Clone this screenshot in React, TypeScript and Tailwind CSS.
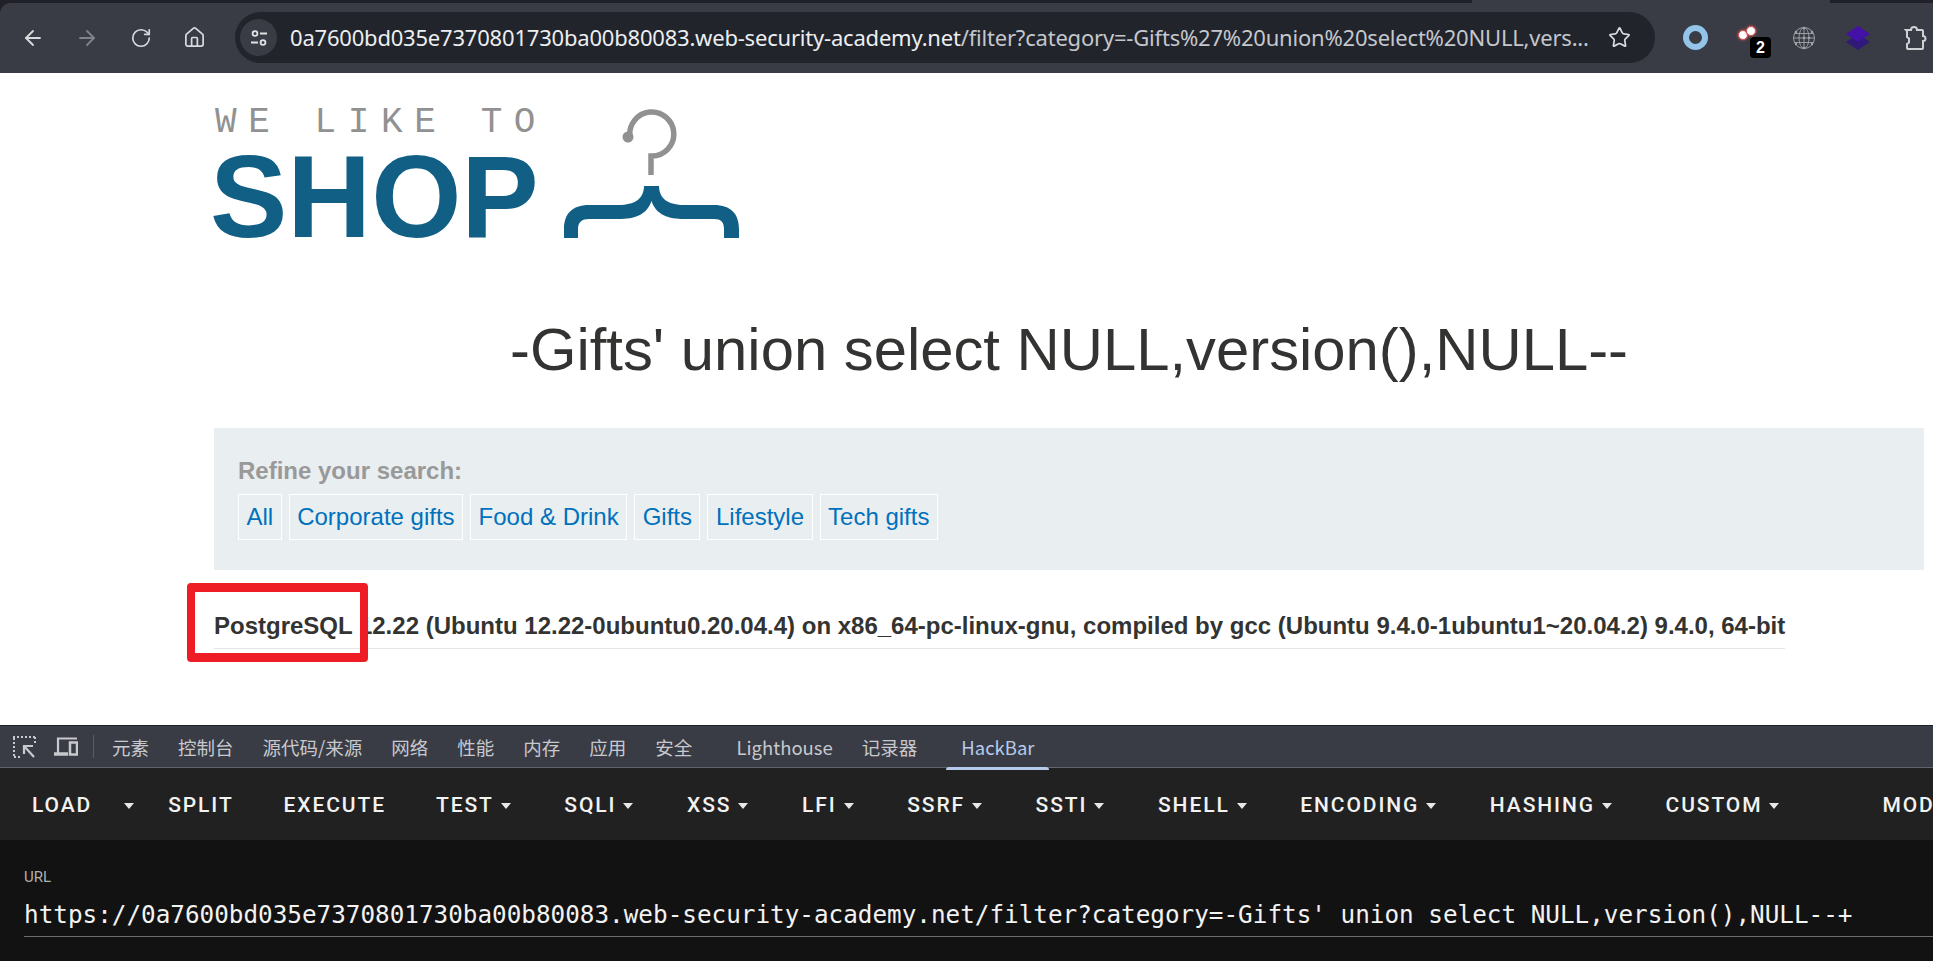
import { ArrowLeft, ArrowRight, RotateCw, Home, Star } from 'lucide-react'

const CATEGORIES = ['All', 'Corporate gifts', 'Food & Drink', 'Gifts', 'Lifestyle', 'Tech gifts']

const TABS = [
  { label: '元素', cls: '' },
  { label: '控制台', cls: '' },
  { label: '源代码/来源', cls: '' },
  { label: '网络', cls: '' },
  { label: '性能', cls: '' },
  { label: '内存', cls: '' },
  { label: '应用', cls: '' },
  { label: '安全', cls: '' },
  { label: 'Lighthouse', cls: 'ml-[15px]' },
  { label: '记录器', cls: '' },
]

const MENU = ['TEST', 'SQLI', 'XSS', 'LFI', 'SSRF', 'SSTI', 'SHELL', 'ENCODING', 'HASHING', 'CUSTOM']

function Caret() {
  return (
    <svg width="10" height="6" viewBox="0 0 10 6" className="shrink-0">
      <path d="M0 0h10L5 6z" fill="#e8e8e8" />
    </svg>
  )
}

function BrowserBar() {
  return (
    <div className="h-[73px] shrink-0 bg-[#1f2028]">
      <div className="h-[3px] flex">
        <div className="w-[1472px]" />
        <div className="w-[358px] bg-[#3a3c45]" />
      </div>
      <div className="h-[70px] rounded-tl-[10px] bg-[#3a3c45] flex items-center pl-[21px] pb-[1px]">
        <ArrowLeft size={24} strokeWidth={1.8} className="text-[#d8dadf]" />
        <ArrowRight size={24} strokeWidth={1.8} className="text-[#7f828a] ml-[30px]" />
        <RotateCw size={22} strokeWidth={1.8} className="text-[#d8dadf] ml-[31px]" />
        <Home size={23} strokeWidth={1.8} className="text-[#d8dadf] ml-[31px]" />
        <div className="ml-[29px] w-[1420px] h-[51px] rounded-full bg-[#22242c] flex items-center pl-[5px]">
          <div className="w-[37px] h-[37px] rounded-full bg-[#3a3c45] flex items-center justify-center shrink-0">
            <svg width="20" height="20" viewBox="0 0 20 20" fill="none" stroke="#dfe1e5" strokeWidth="1.8">
              <circle cx="6" cy="5.500" r="2.4" />
              <path d="M11 5.500h7M2 14.500h7" />
              <circle cx="14" cy="14.500" r="2.4" />
            </svg>
          </div>
          <div className="ml-[13px] text-[22px] font-['Noto_Sans',sans-serif] text-[#c4c7cc] whitespace-nowrap tracking-[-0.2px]">
            <span className="text-[#eceef1]">0a7600bd035e7370801730ba00b80083.web-security-academy.net</span>
            /filter?category=-Gifts%27%20union%20select%20NULL,vers...
          </div>
          <Star size={23} strokeWidth={1.8} className="text-[#d8dadf] ml-auto mr-[24px]" />
        </div>
        <div className="ml-[28px] w-[25px] h-[25px] rounded-full border-[6px] border-[#93c5ea]" />
        <div className="relative ml-[30px] w-[34px] h-[36px]">
          <div className="absolute left-0 top-[10px] w-[10px] h-[10px] rounded-full bg-white border border-[#d05050] shadow-[0_0_3px_#e25050]" />
          <div className="absolute left-[8px] top-[6px] w-[10px] h-[10px] rounded-full bg-white border border-[#d05050] shadow-[0_0_3px_#e25050]" />
          <div className="absolute left-[12px] top-[17px] w-[21px] h-[21px] rounded-[4px] bg-black text-white text-[16px] font-bold leading-[21px] text-center font-['Liberation_Sans',sans-serif]">2</div>
        </div>
        <svg width="24" height="24" viewBox="0 0 24 24" fill="none" stroke="#a4a6ab" strokeWidth="0.9" className="ml-[20px]">
          <circle cx="12" cy="12" r="10.500" />
          <ellipse cx="12" cy="12" rx="5" ry="10.500" />
          <path d="M12 1.500v21M2.500 7.500h19M1.500 12h21M2.500 16.500h19" />
          <g fill="#a4a6ab" stroke="none">
            <circle cx="12" cy="2" r="1.200" />
            <circle cx="4" cy="6" r="1.200" />
            <circle cx="20" cy="6" r="1.200" />
            <circle cx="4" cy="18" r="1.200" />
            <circle cx="20" cy="18" r="1.200" />
            <circle cx="12" cy="22" r="1.200" />
            <circle cx="12" cy="12" r="1.200" />
            <circle cx="17" cy="12" r="1.200" />
          </g>
        </svg>
        <svg width="26" height="26" viewBox="0 0 26 26" className="ml-[29px]">
          <path d="M13 9l12 8-12 8L1 17z" fill="#2f1a7a" />
          <path d="M13 1l12 8-12 8L1 9z" fill="#4311a8" />
        </svg>
        <svg width="26" height="26" viewBox="0 0 26 26" fill="none" stroke="#cfd1d5" strokeWidth="2" className="ml-[31px]">
          <path d="M4 5h5a3 3 0 0 1 6 0h5a1 1 0 0 1 1 1v5a2.500 2.500 0 0 1 0 5v7a1 1 0 0 1-1 1H6a1 1 0 0 1-1-1v-4l2-1.500v-4L5 12V6z" />
        </svg>
      </div>
    </div>
  )
}

function Logo() {
  return (
    <div className="flex items-start h-[132px]">
      <div className="w-[350px] shrink-0">
        <div className="font-['Liberation_Mono',monospace] text-[36px] leading-[24px] h-[24px] mt-[2px] tracking-[11.6px] text-[#919191] whitespace-nowrap pl-[1px]">WE LIKE TO</div>
        <div className="font-['Liberation_Sans',sans-serif] font-bold text-[116px] leading-[84px] mt-[20px] text-[#115f84] -ml-[4px]">SHOP</div>
      </div>
      <svg width="175" height="130" viewBox="0 0 175 130">
        <path d="M66 28A22 22 0 1 1 88 47H87V66" fill="none" stroke="#919191" strokeWidth="5.5" />
        <circle cx="64" cy="28" r="5.5" fill="#919191" />
        <path d="M80 77H95C95 90 105 96 120 96H150C167 96 175 105 175 120V129H160V120C160 113 157 110 150 110H120C105 110 92 106 87.500 92C83 106 70 110 55 110H25C18 110 14 113 14 120V129H0V120C0 105 8 96 25 96H55C70 96 80 90 80 77Z" fill="#115f84" />
      </svg>
    </div>
  )
}

function Page() {
  return (
    <div className="flex-1 bg-white pt-[36px] pl-[214px] pr-[9px] font-['Liberation_Sans',sans-serif] relative">
      <Logo />
      <h1 className="text-center text-[59.8px] leading-[60px] text-[#333332] mt-[79px] whitespace-nowrap">-Gifts' union select NULL,version(),NULL--</h1>
      <div className="mt-[48px] h-[142px] bg-[#e9eef1] pt-[29px] pl-[24px]">
        <div className="text-[24px] leading-[28px] font-bold text-[#999999]">Refine your search:</div>
        <div className="flex gap-[7px] mt-[9px]">
          {CATEGORIES.map((c) => (
            <a key={c} className="h-[46px] px-[7.5px] border border-white text-[#0071bc] text-[24px] leading-[44px] whitespace-nowrap">{c}</a>
          ))}
        </div>
      </div>
      <div className="mt-[40px] w-[1571px] h-[39px] border-b border-[#e6e6e6] text-[#333332] font-bold text-[24px] leading-[32px] whitespace-nowrap">
        PostgreSQL 12.22 (Ubuntu 12.22-0ubuntu0.20.04.4) on x86_64-pc-linux-gnu, compiled by gcc (Ubuntu 9.4.0-1ubuntu1~20.04.2) 9.4.0, 64-bit
      </div>
      <div className="absolute left-[187px] top-[510px] w-[181px] h-[79px] border-x-[8px] border-y-[9px] border-[#ee1c25] rounded-[4px]" />
    </div>
  )
}

function DevTools() {
  return (
    <div className="shrink-0 overflow-hidden">
      <div className="h-[43px] bg-[#3a3c45] border-t border-[#1f2028] border-b border-b-[#62646b] flex items-center pl-[13px] font-['Noto_Sans_CJK_SC','Noto_Sans',sans-serif] text-[18.5px] text-[#c7c9ce]">
        <svg width="23" height="22" viewBox="0 0 23 22" fill="none" stroke="#c7c9ce" strokeWidth="2">
          <path d="M0 1H22M1 2V21M1 21H7M22 1V8" strokeDasharray="2 2" />
          <path d="M11 18V10H20M11 10L21 21" strokeWidth="2.200" />
        </svg>
        <svg width="24" height="19" viewBox="0 0 24 19" fill="none" stroke="#c7c9ce" strokeWidth="2.200" className="ml-[18px]">
          <path d="M4 16V1.500H23" />
          <path d="M0 17h14" strokeWidth="3.500" />
          <rect x="16" y="5.500" width="7" height="12" strokeWidth="2.500" />
        </svg>
        <div className="w-px h-[23px] bg-[#5a5c63] ml-[15px] mr-[18px]" />
        <div className="flex items-center gap-[29px] whitespace-nowrap pt-[2px]">
          {TABS.map((t) => (
            <span key={t.label} className={t.cls}>{t.label}</span>
          ))}
          <div className="relative ml-[15px] text-[#b6cbec]">
            HackBar
            <div className="absolute -left-[15px] -right-[14px] top-[33px] h-[3px] rounded-t-[3px] bg-[#b6cbec]" />
          </div>
        </div>
      </div>
      <div className="h-[72px] bg-[#212121] flex items-center pl-[32px] pt-[4px] font-['Roboto',sans-serif] font-medium text-[21px] tracking-[1.9px] text-[#f2f2f2] whitespace-nowrap overflow-hidden">
        <span>LOAD</span>
        <div className="w-px h-[47px] bg-[#2c2c2c] ml-[24px] mr-[8px]" />
        <Caret />
        <span className="ml-[34px]">SPLIT</span>
        <span className="ml-[50px]">EXECUTE</span>
        <div className="flex items-center ml-[50px] gap-[53.6px]">
          {MENU.map((m) => (
            <div key={m} className="flex items-center gap-[7px]">
              <span>{m}</span>
              <Caret />
            </div>
          ))}
        </div>
        <span className="ml-[103px]">MODIFY HEADER</span>
      </div>
      <div className="h-[121px] bg-[#121212] pl-[24px] pt-[27px]">
        <div className="font-['Roboto',sans-serif] text-[15px] leading-[20px] text-[#b0b0b0]">URL</div>
        <div className="mt-[11px] h-[39px] border-b border-[#6e6e6e] font-['DejaVu_Sans_Mono',monospace] text-[24.3px] leading-[34px] text-[#f2f2f2] whitespace-nowrap">
          https://0a7600bd035e7370801730ba00b80083.web-security-academy.net/filter?category=-Gifts' union select NULL,version(),NULL--+
        </div>
      </div>
    </div>
  )
}

export default function App() {
  return (
    <div className="w-[1933px] h-[961px] flex flex-col overflow-hidden">
      <BrowserBar />
      <Page />
      <DevTools />
    </div>
  )
}
